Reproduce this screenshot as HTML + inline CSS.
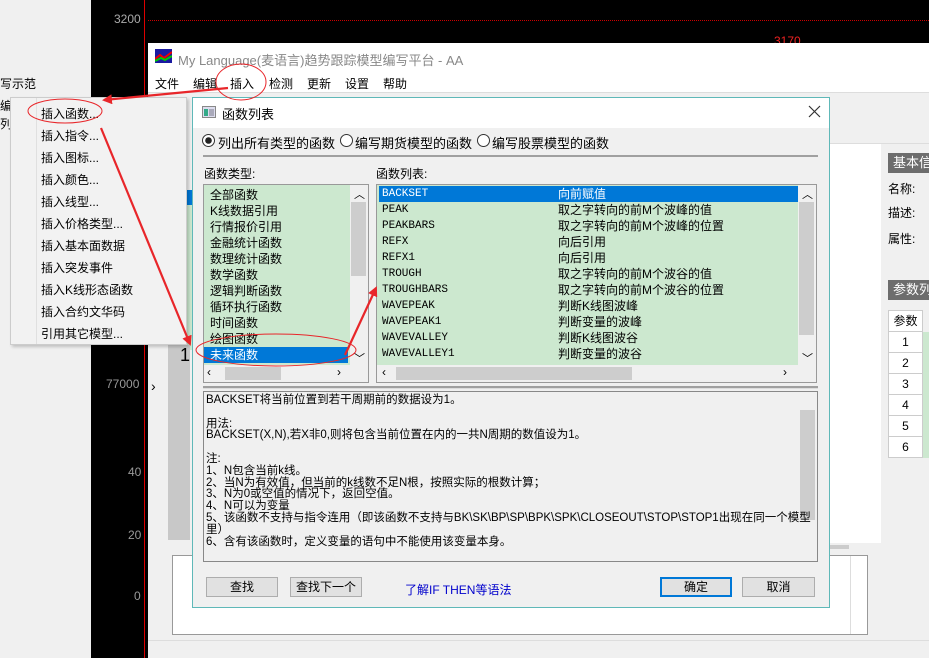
<!DOCTYPE html><html><head><meta charset="utf-8"><style>
*{margin:0;padding:0;box-sizing:border-box}
body{width:929px;height:658px;overflow:hidden;background:#f0f0f0;position:relative;font-family:"Liberation Sans","Noto Sans CJK SC",sans-serif;font-size:12px;color:#000}
.a{position:absolute;white-space:nowrap}
.m{font-family:"Liberation Mono","Noto Sans CJK SC",monospace;font-size:11px}
.li div{height:16px;line-height:16px;padding-left:6px;font-size:12px}
.btn{position:absolute;height:20px;border:1px solid #adadad;background:#e1e1e1;text-align:center;line-height:18px}
</style></head><body>
<div class="a" style="left:91px;top:0;width:838px;height:43px;background:#000"></div>
<div class="a" style="left:91px;top:0;width:57px;height:658px;background:#000"></div>
<div class="a" style="left:144px;top:0;width:1px;height:658px;background:#d00"></div>
<div class="a" style="left:148px;top:20px;width:781px;border-top:1px dotted #c00"></div>
<div class="a" style="left:114px;top:12px;color:#aaa;font-size:12px">3200</div>
<div class="a" style="left:774px;top:34px;color:#e22;font-size:12px">3170</div>
<div class="a" style="left:106px;top:377px;color:#999">77000</div>
<div class="a" style="left:128px;top:465px;color:#999">40</div>
<div class="a" style="left:128px;top:528px;color:#999">20</div>
<div class="a" style="left:134px;top:589px;color:#999">0</div>
<div class="a" style="left:0;top:75px;font-size:12px">写示范</div>
<div class="a" style="left:0;top:97px">编</div><div class="a" style="left:0;top:115px">列</div>
<div class="a" style="left:148px;top:43px;width:781px;height:615px;background:#f0f0f0"></div>
<div class="a" style="left:148px;top:43px;width:781px;height:32px;background:#fff"></div>
<svg class="a" style="left:155px;top:49px" width="17" height="14"><rect width="17" height="14" fill="#1a1aa0"/><path d="M0 10 L5 6 L9 9 L17 3" stroke="#e00" stroke-width="2" fill="none"/><path d="M0 12 L6 9 L10 11 L17 7" stroke="#0c0" stroke-width="2" fill="none"/></svg>
<div class="a" style="left:178px;top:50px;color:#888;font-size:13px">My Language(麦语言)趋势跟踪模型编写平台 - AA</div>
<div class="a" style="left:148px;top:75px;width:781px;height:17px;background:#fff"></div>
<div class="a" style="left:155px;top:75px;font-size:12px">文件</div>
<div class="a" style="left:193px;top:75px">编辑</div><div class="a" style="left:230px;top:75px">插入</div><div class="a" style="left:269px;top:75px">检测</div><div class="a" style="left:307px;top:75px">更新</div><div class="a" style="left:345px;top:75px">设置</div><div class="a" style="left:383px;top:75px">帮助</div>
<div class="a" style="left:148px;top:92px;width:781px;height:1px;background:#ddd"></div>
<div class="a" style="left:170px;top:190px;width:22px;height:160px;background:#cce8cf"></div>
<div class="a" style="left:170px;top:190px;width:22px;height:15px;background:#0078d7"></div>
<div class="a" style="left:168px;top:345px;width:22px;height:195px;background:#c8c8c8"></div>
<div class="a" style="left:180px;top:345px;font-size:18px">1</div>
<div class="a" style="left:151px;top:378px;font-size:14px">›</div>
<div class="a" style="left:873px;top:364px;font-size:14px">›</div>
<div class="a" style="left:829px;top:143px;width:52px;height:400px;background:#fff"></div>
<div class="a" style="left:829px;top:143px;width:100px;height:1px;background:#ddd"></div>
<div class="a" style="left:829px;top:545px;width:20px;height:4px;background:#ccc"></div>
<div class="a" style="left:887px;top:148px;width:42px;height:400px;background:#f0f0f0"></div>
<div class="a" style="left:888px;top:153px;width:41px;height:20px;background:#6d6d6d;color:#fff;font-size:13px;line-height:20px;padding-left:5px">基本信</div>
<div class="a" style="left:888px;top:180px">名称:</div><div class="a" style="left:888px;top:204px">描述:</div><div class="a" style="left:888px;top:230px">属性:</div>
<div class="a" style="left:888px;top:280px;width:41px;height:20px;background:#6d6d6d;color:#fff;font-size:13px;line-height:20px;padding-left:5px">参数列</div>
<div class="a" style="left:888px;top:310px;width:41px">
<div style="height:22px;border:1px solid #ccc;width:35px;text-align:center;line-height:20px;background:#fff">参数</div>
<div style="height:21px;border:1px solid #ccc;border-top:0;width:35px;text-align:center;line-height:20px;background:#fff">1</div>
<div style="height:21px;border:1px solid #ccc;border-top:0;width:35px;text-align:center;line-height:20px;background:#fff">2</div>
<div style="height:21px;border:1px solid #ccc;border-top:0;width:35px;text-align:center;line-height:20px;background:#fff">3</div>
<div style="height:21px;border:1px solid #ccc;border-top:0;width:35px;text-align:center;line-height:20px;background:#fff">4</div>
<div style="height:21px;border:1px solid #ccc;border-top:0;width:35px;text-align:center;line-height:20px;background:#fff">5</div>
<div style="height:21px;border:1px solid #ccc;border-top:0;width:35px;text-align:center;line-height:20px;background:#fff">6</div>
</div>
<div class="a" style="left:923px;top:332px;width:6px;height:126px;background:#cce8cf"></div>
<div class="a" style="left:172px;top:555px;width:696px;height:80px;background:#fff;border:1px solid #999"></div>
<div class="a" style="left:850px;top:556px;width:1px;height:78px;background:#ddd"></div>
<div class="a" style="left:148px;top:640px;width:781px;height:1px;background:#ddd"></div>
<div class="a" style="left:10px;top:97px;width:177px;height:248px;background:#f2f2f2;border:1px solid #ccc;box-shadow:2px 2px 3px rgba(0,0,0,.2)"></div>
<div class="a" style="left:36px;top:98px;width:1px;height:246px;background:#e0e0e0"></div>
<div class="a" style="left:41px;top:103px;line-height:22px;font-size:12px">插入函数...<br>插入指令...<br>插入图标...<br>插入颜色...<br>插入线型...<br>插入价格类型...<br>插入基本面数据<br>插入突发事件<br>插入K线形态函数<br>插入合约文华码<br>引用其它模型...</div>
<div class="a" style="left:192px;top:97px;width:638px;height:511px;background:#f0f0f0;border:1px solid #5fb8b8"></div>
<div class="a" style="left:193px;top:98px;width:636px;height:30px;background:#fff"></div>
<svg class="a" style="left:202px;top:106px" width="14" height="12"><rect x=".5" y=".5" width="13" height="11" fill="#dde" stroke="#888"/><rect x="2" y="3" width="4" height="7" fill="#3a8"/><rect x="7" y="3" width="5" height="7" fill="#aab"/></svg>
<div class="a" style="left:222px;top:104px;font-size:13px">函数列表</div>
<svg class="a" style="left:808px;top:105px" width="13" height="13"><path d="M1 1L12 12M12 1L1 12" stroke="#333" stroke-width="1.2"/></svg>
<svg class="a" style="left:202px;top:134px" width="13" height="13"><circle cx="6.5" cy="6.5" r="6" fill="#fff" stroke="#333"/><circle cx="6.5" cy="6.5" r="3.3" fill="#222"/></svg>
<div class="a" style="left:218px;top:133px;font-size:13px">列出所有类型的函数</div>
<svg class="a" style="left:340px;top:134px" width="13" height="13"><circle cx="6.5" cy="6.5" r="6" fill="#fff" stroke="#333"/></svg>
<div class="a" style="left:355px;top:133px;font-size:13px">编写期货模型的函数</div>
<svg class="a" style="left:477px;top:134px" width="13" height="13"><circle cx="6.5" cy="6.5" r="6" fill="#fff" stroke="#333"/></svg>
<div class="a" style="left:492px;top:133px;font-size:13px">编写股票模型的函数</div>
<div class="a" style="left:203px;top:155px;width:615px;height:2px;background:#a0a0a0"></div>
<div class="a" style="left:204px;top:165px">函数类型:</div>
<div class="a" style="left:376px;top:165px">函数列表:</div>
<div class="a li" style="left:203px;top:184px;width:166px;height:199px;border:1px solid #999;background:#cce8cf;padding-top:2px;overflow:hidden">
<div>全部函数</div><div>K线数据引用</div><div>行情报价引用</div><div>金融统计函数</div><div>数理统计函数</div><div>数学函数</div><div>逻辑判断函数</div><div>循环执行函数</div><div>时间函数</div><div>绘图函数</div><div style="background:#0078d7;color:#fff;width:144px">未来函数</div></div>
<div class="a" style="left:350px;top:185px;width:18px;height:180px;background:#f0f0f0"></div>
<div class="a" style="left:351px;top:202px;width:15px;height:74px;background:#cdcdcd"></div>
<div class="a" style="left:354px;top:186px;font-size:11px">︿</div><div class="a" style="left:354px;top:350px;font-size:11px">﹀</div>
<div class="a" style="left:204px;top:365px;width:164px;height:17px;background:#f0f0f0"></div>
<div class="a" style="left:225px;top:367px;width:56px;height:13px;background:#cdcdcd"></div>
<div class="a" style="left:207px;top:365px">‹</div><div class="a" style="left:337px;top:365px">›</div>
<div class="a" style="left:376px;top:184px;width:441px;height:199px;border:1px solid #999;background:#cce8cf"></div>
<div class="a" style="left:379px;top:186px;width:419px;height:16px;background:#0078d7"></div>
<div class="a m" style="left:382px;top:186px;line-height:16px"><span style="color:#fff">BACKSET</span><br>PEAK<br>PEAKBARS<br>REFX<br>REFX1<br>TROUGH<br>TROUGHBARS<br>WAVEPEAK<br>WAVEPEAK1<br>WAVEVALLEY<br>WAVEVALLEY1</div>
<div class="a" style="left:558px;top:186px;line-height:16px;font-size:12px"><span style="color:#fff">向前赋值</span><br>取之字转向的前M个波峰的值<br>取之字转向的前M个波峰的位置<br>向后引用<br>向后引用<br>取之字转向的前M个波谷的值<br>取之字转向的前M个波谷的位置<br>判断K线图波峰<br>判断变量的波峰<br>判断K线图波谷<br>判断变量的波谷</div>
<div class="a" style="left:798px;top:185px;width:18px;height:180px;background:#f0f0f0"></div>
<div class="a" style="left:799px;top:202px;width:15px;height:133px;background:#cdcdcd"></div>
<div class="a" style="left:802px;top:186px;font-size:11px">︿</div><div class="a" style="left:802px;top:350px;font-size:11px">﹀</div>
<div class="a" style="left:377px;top:365px;width:439px;height:17px;background:#f0f0f0"></div>
<div class="a" style="left:396px;top:367px;width:236px;height:13px;background:#cdcdcd"></div>
<div class="a" style="left:382px;top:365px">‹</div><div class="a" style="left:783px;top:365px">›</div>
<div class="a" style="left:203px;top:386px;width:615px;height:3px;background:#a0a0a0;border-bottom:1px solid #ddd"></div>
<div class="a" style="left:203px;top:391px;width:615px;height:171px;border:1px solid #888;background:#f0f0f0"></div>
<div class="a" style="left:799px;top:392px;width:17px;height:169px;background:#f0f0f0"></div>
<div class="a" style="left:800px;top:410px;width:15px;height:110px;background:#cdcdcd"></div>
<div class="a" style="left:206px;top:395px;font-size:11.5px;line-height:11.8px;letter-spacing:0">BACKSET将当前位置到若干周期前的数据设为1。<br><br>用法:<br>BACKSET(X,N),若X非0,则将包含当前位置在内的一共N周期的数值设为1。<br><br>注:<br>1、N包含当前k线。<br>2、当N为有效值，但当前的k线数不足N根，按照实际的根数计算；<br>3、N为0或空值的情况下，返回空值。<br>4、N可以为变量<br>5、该函数不支持与指令连用（即该函数不支持与BK\SK\BP\SP\BPK\SPK\CLOSEOUT\STOP\STOP1出现在同一个模型<br>里）<br>6、含有该函数时，定义变量的语句中不能使用该变量本身。</div>
<div class="btn" style="left:206px;top:577px;width:72px">查找</div>
<div class="btn" style="left:290px;top:577px;width:72px">查找下一个</div>
<div class="a" style="left:405px;top:581px;color:#00c;font-size:12px">了解IF THEN等语法</div>
<div class="btn" style="left:660px;top:577px;width:72px;border:2px solid #0078d7;line-height:16px">确定</div>
<div class="btn" style="left:742px;top:577px;width:73px">取消</div>
<svg class="a" style="left:0;top:0" width="929" height="658">
<defs><marker id="ar" markerWidth="10" markerHeight="10" refX="8" refY="5" orient="auto" markerUnits="userSpaceOnUse"><path d="M0 0L10 5L0 10z" fill="#e8262a"/></marker></defs>
<g fill="none" stroke="#e8262a" stroke-width="1">
<ellipse cx="241" cy="82" rx="25" ry="18"/>
<ellipse cx="65" cy="111" rx="37" ry="12"/>
<ellipse cx="276" cy="350" rx="80" ry="16"/>
</g>
<g stroke="#e8262a" stroke-width="2.2" fill="none">
<line x1="228" y1="88" x2="104" y2="100" marker-end="url(#ar)"/>
<line x1="101" y1="128" x2="190" y2="344" marker-end="url(#ar)"/>
<line x1="345" y1="355" x2="376" y2="288" marker-end="url(#ar)"/>
</g></svg>
</body></html>
